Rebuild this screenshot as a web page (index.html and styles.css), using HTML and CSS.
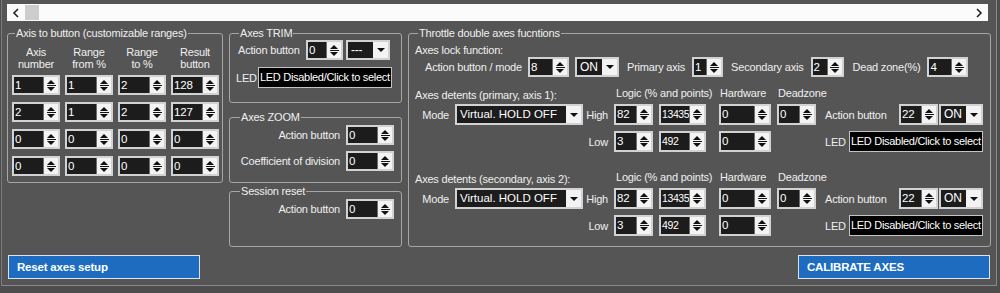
FILE: index.html
```html
<!DOCTYPE html>
<html lang="en">
<head>
    <meta charset="UTF-8">
    <title>Axes setup</title>
    <link rel="stylesheet" href="styles.css">
</head>
<body>

<div class="window">
    <div class="hscroll">
        <svg class="chev" width="8" height="10" viewBox="0 0 8 10"><polyline points="6,1 2,5 6,9" fill="none" stroke="#222" stroke-width="1.6"/></svg>
        <span class="thumb"></span>
        <span class="track"></span>
        <svg class="chev" width="8" height="10" viewBox="0 0 8 10"><polyline points="2,1 6,5 2,9" fill="none" stroke="#222" stroke-width="1.6"/></svg>
    </div>

    <div class="content">
        <!-- axis to button -->
        <fieldset class="grp axis-btn">
            <legend>Axis to button (customizable ranges)</legend>
            <div class="ab-grid">
                <div class="hdr">Axis<br>number</div>
                <div class="hdr">Range<br>from %</div>
                <div class="hdr">Range<br>to %</div>
                <div class="hdr">Result<br>button</div>

                <div class="spin"><span class="val">1</span><span class="btns"></span></div>
                <div class="spin"><span class="val">1</span><span class="btns"></span></div>
                <div class="spin"><span class="val">2</span><span class="btns"></span></div>
                <div class="spin"><span class="val">128</span><span class="btns"></span></div>

                <div class="spin"><span class="val">2</span><span class="btns"></span></div>
                <div class="spin"><span class="val">1</span><span class="btns"></span></div>
                <div class="spin"><span class="val">2</span><span class="btns"></span></div>
                <div class="spin"><span class="val">127</span><span class="btns"></span></div>

                <div class="spin"><span class="val">0</span><span class="btns"></span></div>
                <div class="spin"><span class="val">0</span><span class="btns"></span></div>
                <div class="spin"><span class="val">0</span><span class="btns"></span></div>
                <div class="spin"><span class="val">0</span><span class="btns"></span></div>

                <div class="spin"><span class="val">0</span><span class="btns"></span></div>
                <div class="spin"><span class="val">0</span><span class="btns"></span></div>
                <div class="spin"><span class="val">0</span><span class="btns"></span></div>
                <div class="spin"><span class="val">0</span><span class="btns"></span></div>
            </div>
        </fieldset>

        <div class="midcol">
            <fieldset class="grp trim">
                <legend>Axes TRIM</legend>
                <div class="row">
                    <span class="lbl trim-lbl">Action button</span>
                    <div class="spin w37"><span class="val">0</span><span class="btns"></span></div>
                    <div class="combo w44"><span class="val">---</span><span class="arrow"></span></div>
                </div>
                <div class="row led-row">
                    <span class="lbl led-lbl">LED</span>
                    <div class="led">LED Disabled/Click to select</div>
                </div>
            </fieldset>

            <fieldset class="grp zoom">
                <legend>Axes ZOOM</legend>
                <div class="rrow">
                    <span class="lbl">Action button</span>
                    <div class="spin w48"><span class="val">0</span><span class="btns"></span></div>
                </div>
                <div class="rrow">
                    <span class="lbl">Coefficient of division</span>
                    <div class="spin w48"><span class="val">0</span><span class="btns"></span></div>
                </div>
            </fieldset>

            <fieldset class="grp session">
                <legend>Session reset</legend>
                <div class="rrow">
                    <span class="lbl">Action button</span>
                    <div class="spin w48"><span class="val">0</span><span class="btns"></span></div>
                </div>
            </fieldset>
        </div>

        <!-- throttle -->
        <fieldset class="grp throttle">
            <legend>Throttle double axes fucntions</legend>
            <div class="sub-title">Axes lock function:</div>
            <div class="lock-row">
                <span class="lbl lock-lbl">Action button / mode</span>
                <div class="spin w41"><span class="val">8</span><span class="btns"></span></div>
                <div class="combo w44 gap6"><span class="val">ON</span><span class="arrow"></span></div>
                <span class="lbl gap8">Primary axis</span>
                <div class="spin w31 gap7"><span class="val">1</span><span class="btns"></span></div>
                <span class="lbl gap8">Secondary axis</span>
                <div class="spin w33 gap7"><span class="val">2</span><span class="btns"></span></div>
                <span class="lbl gap9">Dead zone(%)</span>
                <div class="spin w41 gap7"><span class="val">4</span><span class="btns"></span></div>
            </div>

            <div class="detents">
                <div class="det-grid">
                    <div class="det-title">Axes detents (primary, axis 1):</div>
                    <div class="col-hdr c-logic">Logic (% and points)</div>
                    <div class="col-hdr c-hw">Hardware</div>
                    <div class="col-hdr c-dz">Deadzone</div>

                    <span class="lbl mode r-hi">Mode</span>
                    <div class="combo big r-hi"><span class="val">Virtual. HOLD OFF</span><span class="arrow"></span></div>
                    <span class="lbl hl r-hi">High</span>
                    <div class="spin c-pct r-hi"><span class="val">82</span><span class="btns"></span></div>
                    <div class="spin c-pts r-hi"><span class="val">13435</span><span class="btns"></span></div>
                    <div class="spin c-hw r-hi"><span class="val">0</span><span class="btns"></span></div>
                    <div class="spin c-dz r-hi"><span class="val">0</span><span class="btns"></span></div>

                    <span class="lbl hl r-lo">Low</span>
                    <div class="spin c-pct r-lo"><span class="val">3</span><span class="btns"></span></div>
                    <div class="spin c-pts r-lo"><span class="val">492</span><span class="btns"></span></div>
                    <div class="spin c-hw r-lo"><span class="val">0</span><span class="btns"></span></div>
                </div>
                <div class="det-side">
                    <div class="side-row">
                        <span class="lbl">Action button</span>
                        <div class="spin w39 tall"><span class="val">22</span><span class="btns"></span></div>
                        <div class="combo w44 gap1 tall"><span class="val">ON</span><span class="arrow"></span></div>
                    </div>
                    <div class="side-row">
                        <span class="lbl">LED</span>
                        <div class="led">LED Disabled/Click to select</div>
                    </div>
                </div>
            </div>

            <div class="detents second">
                <div class="det-grid">
                    <div class="det-title">Axes detents (secondary, axis 2):</div>
                    <div class="col-hdr c-logic">Logic (% and points)</div>
                    <div class="col-hdr c-hw">Hardware</div>
                    <div class="col-hdr c-dz">Deadzone</div>

                    <span class="lbl mode r-hi">Mode</span>
                    <div class="combo big r-hi"><span class="val">Virtual. HOLD OFF</span><span class="arrow"></span></div>
                    <span class="lbl hl r-hi">High</span>
                    <div class="spin c-pct r-hi"><span class="val">82</span><span class="btns"></span></div>
                    <div class="spin c-pts r-hi"><span class="val">13435</span><span class="btns"></span></div>
                    <div class="spin c-hw r-hi"><span class="val">0</span><span class="btns"></span></div>
                    <div class="spin c-dz r-hi"><span class="val">0</span><span class="btns"></span></div>

                    <span class="lbl hl r-lo">Low</span>
                    <div class="spin c-pct r-lo"><span class="val">3</span><span class="btns"></span></div>
                    <div class="spin c-pts r-lo"><span class="val">492</span><span class="btns"></span></div>
                    <div class="spin c-hw r-lo"><span class="val">0</span><span class="btns"></span></div>
                </div>
                <div class="det-side">
                    <div class="side-row">
                        <span class="lbl">Action button</span>
                        <div class="spin w39 tall"><span class="val">22</span><span class="btns"></span></div>
                        <div class="combo w44 gap1 tall"><span class="val">ON</span><span class="arrow"></span></div>
                    </div>
                    <div class="side-row">
                        <span class="lbl">LED</span>
                        <div class="led">LED Disabled/Click to select</div>
                    </div>
                </div>
            </div>
        </fieldset>
    </div>

    <div class="actions">
        <button class="blue-btn">Reset axes setup</button>
        <button class="blue-btn">CALIBRATE AXES</button>
    </div>
</div>

</body>
</html>
```

FILE: styles.css
```css
body {
    margin: 0;
    background-color: #4d4d4d;
    font-family: "Liberation Sans", Arial, sans-serif;
    font-size: 11px;
    letter-spacing: -0.2px;
    color: #efefef;
}
.window {
    margin-left: 1px;
    width: 994px;
    height: 285px;
    background-color: #555555;
    border-left: 1px solid #7c7c7c;
    border-right: 1px solid #8a8a8a;
    border-bottom: 1px solid #8a8a8a;
}

/* top scroll bar */
.hscroll {
    display: flex;
    margin-left: 5px;
    padding-top: 4px;
    width: 981px;
    height: 17px;
}
.hscroll > * {
    flex-shrink: 0;
    background-color: #fbfbfb;
}
.hscroll .chev {
    width: 8px;
    height: 10px;
    padding: 4px 5px 3px 5px;
}
.hscroll .thumb {
    width: 14px;
    border-top: 1px solid #fbfbfb;
    border-bottom: 1px solid #fbfbfb;
    background-color: #cdcdcd;
}
.hscroll .track {
    flex: 1;
}

/* main area */
.content {
    display: flex;
    gap: 6px;
    margin-top: 6px;
    padding-left: 5px;
}
.grp {
    margin: 0;
    padding: 0 6px;
    border: 1px solid #a6a6a6;
    border-radius: 3px;
    min-width: 0;
    box-sizing: border-box;
}
.grp legend {
    padding: 0 1px;
    margin-left: 3px;
    line-height: 13px;
}
.lbl {
    white-space: nowrap;
}

/* spinner (numeric up/down) */
.spin {
    display: flex;
    height: 20px;
    box-sizing: border-box;
    border: 2px solid #d2d2d2;
    background-color: #1c1c1c;
    color: #ffffff;
}
.spin.tall {
    height: 21px;
}
.spin .val {
    flex: 1;
    min-width: 0;
    padding-left: 1px;
    font-size: 11.5px;
    line-height: 16px;
    white-space: nowrap;
}
.spin.tall .val {
    line-height: 17px;
}
.spin .btns {
    width: 14px;
    flex-shrink: 0;
    display: flex;
    flex-direction: column;
    align-items: center;
    justify-content: center;
    gap: 3px;
    border-left: 1px solid #6e6e6e;
    background: linear-gradient(#111, #111) center/9px 1px no-repeat, #f3f3f3;
}
.spin .btns::before {
    content: "";
    border-left: 4px solid transparent;
    border-right: 4px solid transparent;
    border-bottom: 4px solid #111;
}
.spin .btns::after {
    content: "";
    border-left: 4px solid transparent;
    border-right: 4px solid transparent;
    border-top: 4px solid #111;
}

/* combo box */
.combo {
    display: flex;
    height: 20px;
    box-sizing: border-box;
    border: 2px solid #d2d2d2;
    background-color: #1c1c1c;
    color: #ffffff;
}
.combo.tall {
    height: 21px;
}
.combo .val {
    flex: 1;
    padding-left: 3px;
    font-size: 12px;
    line-height: 16px;
    white-space: nowrap;
    overflow: hidden;
}
.combo.tall .val {
    line-height: 17px;
}
.combo .arrow {
    width: 15px;
    display: flex;
    align-items: center;
    justify-content: center;
    background-color: #f3f3f3;
}
.combo .arrow::before {
    content: "";
    border-left: 4px solid transparent;
    border-right: 4px solid transparent;
    border-top: 4px solid #111;
}
.combo.big {
    width: 128px;
    height: 21px;
}
.combo.big .val {
    line-height: 17px;
    font-size: 11.5px;
    letter-spacing: 0;
}

.led {
    height: 21px;
    width: 134px;
    box-sizing: border-box;
    border: 1px solid #c4c4c4;
    background-color: #000000;
    color: #ffffff;
    line-height: 19px;
    letter-spacing: -0.3px;
    padding-left: 1px;
    white-space: nowrap;
    overflow: hidden;
}

.w31 { width: 31px; }
.w33 { width: 33px; }
.w37 { width: 37px; }
.w39 { width: 39px; }
.w41 { width: 41px; }
.w44 { width: 44px; }
.w48 { width: 48px; }
.gap1 { margin-left: 1px; }
.gap6 { margin-left: 6px; }
.gap7 { margin-left: 7px; }
.gap8 { margin-left: 8px; }
.gap9 { margin-left: 9px; }

/* axis to button */
.axis-btn {
    width: 216px;
    height: 156px;
    padding: 0 4px;
}
.ab-grid {
    display: grid;
    grid-template-columns: repeat(4, 48px);
    column-gap: 5px;
    row-gap: 7px;
    padding-top: 6px;
}
.ab-grid .hdr {
    text-align: center;
    line-height: 12px;
    margin-bottom: -2px;
}

/* middle column */
.midcol {
    display: flex;
    flex-direction: column;
    width: 173px;
}
.trim {
    height: 76px;
    padding: 0 6px;
}
.trim .row {
    display: flex;
    align-items: center;
}
.trim-lbl {
    width: 70px;
    padding-left: 2px;
    box-sizing: border-box;
}
.trim .combo {
    margin-left: 3px;
}
.trim .led-row {
    margin-top: 7px;
}
.led-lbl {
    width: 22px;
}
.zoom {
    height: 72px;
    margin-top: 8px;
    padding: 0 7px;
}
.session {
    height: 62px;
    margin-top: 2px;
    padding: 0 7px;
}
.rrow {
    display: flex;
    justify-content: flex-end;
    align-items: center;
    gap: 6px;
    margin-top: 1px;
}
.zoom .rrow + .rrow {
    margin-top: 6px;
}

/* throttle group */
.throttle {
    width: 583px;
    height: 220px;
    padding: 0 6px;
}
.sub-title {
    line-height: 13px;
    margin-top: 4px;
}
.lock-row {
    display: flex;
    align-items: center;
    padding-left: 10px;
}
.lock-lbl {
    width: 103px;
}
.detents {
    display: flex;
    margin-top: 10px;
}
.detents.second {
    margin-top: 19px;
}
.det-grid {
    display: grid;
    grid-template-columns: 40px 128px 31px 45px 60px 58px 39px;
    grid-template-rows: 17px 21px 6px 21px;
    align-items: center;
}
.det-title {
    grid-column: 1 / 4;
    grid-row: 1;
    align-self: start;
    padding-top: 2px;
}
.col-hdr {
    grid-row: 1;
    align-self: start;
    white-space: nowrap;
}
.c-pct { grid-column: 4; width: 39px; }
.c-pts { grid-column: 5; width: 47px; }
.c-pts .val {
    font-size: 10.5px;
    letter-spacing: -0.4px;
    padding-left: 1px;
}
.c-hw { grid-column: 6; width: 52px; }
.c-dz { grid-column: 7; width: 39px; }
.col-hdr.c-logic { grid-column: 4 / 6; padding-left: 2px; }
.col-hdr.c-hw, .col-hdr.c-dz { width: auto; padding-left: 1px; }
.r-hi { grid-row: 2; }
.r-lo { grid-row: 4; }
.det-grid .spin { height: 21px; }
.det-grid .spin .val { line-height: 17px; }
.det-grid .mode {
    grid-column: 1;
    text-align: right;
    padding-right: 6px;
}
.det-grid .combo.big {
    grid-column: 2;
}
.det-grid .hl {
    grid-column: 3;
    text-align: right;
    padding-right: 6px;
}

.det-side {
    margin-left: 9px;
    padding-top: 17px;
    width: 158px;
}
.side-row {
    display: flex;
    align-items: center;
}
.side-row .lbl {
    flex: 1;
}
.side-row + .side-row {
    margin-top: 6px;
}

/* bottom buttons */
.actions {
    display: flex;
    justify-content: space-between;
    padding: 0 6px;
    margin-top: 8px;
    width: 982px;
}
.blue-btn {
    width: 192px;
    height: 24px;
    box-sizing: border-box;
    background-color: #1d6cc0;
    border: 1px solid #dbe4ee;
    color: #ffffff;
    font-family: "Liberation Sans", Arial, sans-serif;
    font-weight: bold;
    font-size: 11.5px;
    letter-spacing: -0.2px;
    text-align: left;
    padding: 0 0 0 8px;
    border-radius: 0;
}
```
